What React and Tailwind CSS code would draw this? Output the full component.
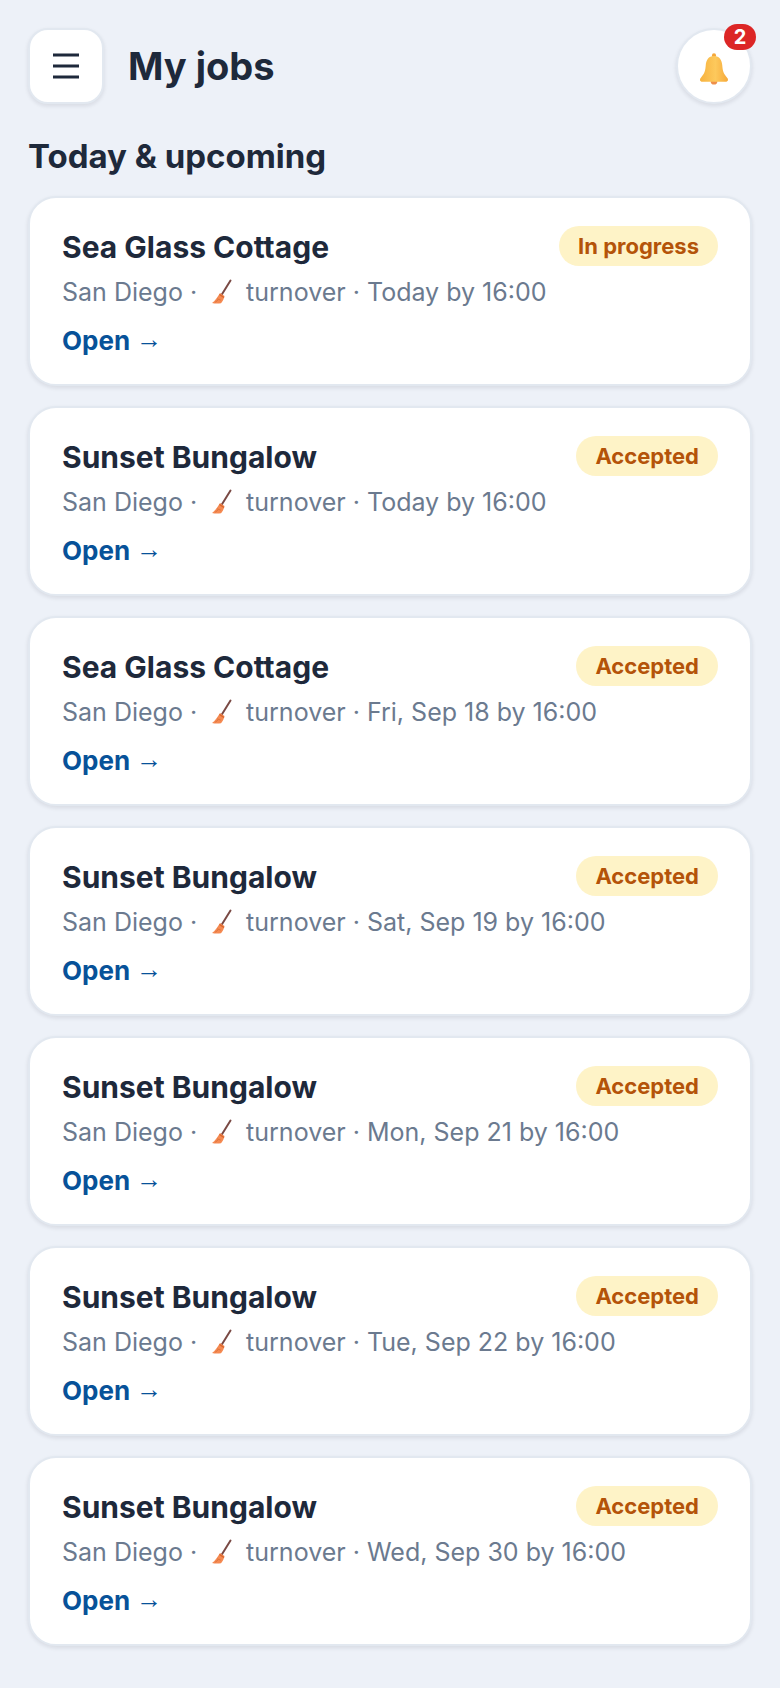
// App.jsx
const jobs = [
  { id: 1, name: 'Sea Glass Cottage', status: 'In progress', when: 'Today by 16:00' },
  { id: 2, name: 'Sunset Bungalow', status: 'Accepted', when: 'Today by 16:00' },
  { id: 3, name: 'Sea Glass Cottage', status: 'Accepted', when: 'Fri, Sep 18 by 16:00' },
  { id: 4, name: 'Sunset Bungalow', status: 'Accepted', when: 'Sat, Sep 19 by 16:00' },
  { id: 5, name: 'Sunset Bungalow', status: 'Accepted', when: 'Mon, Sep 21 by 16:00' },
  { id: 6, name: 'Sunset Bungalow', status: 'Accepted', when: 'Tue, Sep 22 by 16:00' },
  { id: 7, name: 'Sunset Bungalow', status: 'Accepted', when: 'Wed, Sep 30 by 16:00' },
];

const BellIcon = () => (
  <svg width="30" height="32" viewBox="0 0 32 34">
    <defs>
      <linearGradient id="bell" x1="0" y1="0" x2="1" y2="0">
        <stop offset="0" stopColor="#f7b23f" />
        <stop offset="0.55" stopColor="#fdc95c" />
        <stop offset="1" stopColor="#f6a93a" />
      </linearGradient>
    </defs>
    <circle cx="16" cy="2.500" r="2.200" fill="#f5a73a" />
    <ellipse cx="16" cy="30.500" rx="3.500" ry="3" fill="#ee8f4a" />
    <path
      d="M16 3C10 3 7.600 7.500 7.200 13c-.4 5.500-1.200 9-5.400 13.500C.4 28 1 30.500 3.500 30.500h25c2.500 0 3.100-2.500 1.700-4C26 22 25.200 18.500 24.800 13 24.400 7.500 22 3 16 3z"
      fill="url(#bell)"
    />
  </svg>
);

const BroomIcon = () => (
  <svg width="24" height="26" viewBox="0 0 24 26">
    <path d="M21.500 1.500 12.500 16" stroke="#7a4a45" strokeWidth="2" strokeLinecap="round" />
    <path d="M11 14 15.500 17c-.5 2.500-1.500 5-3.500 7.200-3 .5-6.500.4-9-.2C6 22 8.500 18 11 14z" fill="#f58a52" />
    <path d="M10.500 15.500 15 18.500" stroke="#d9662f" strokeWidth="1.500" />
    <path d="M8.500 20l3 1M6.500 23l2-1.500" stroke="#e0733a" strokeWidth="1" strokeLinecap="round" />
  </svg>
);

const JobCard = ({ job }) => (
  <div className="flex h-[190px] flex-col rounded-[28px] border-2 border-[#e2e8f0] bg-white px-[32px] pt-[27px] shadow-[0_2px_4px_rgba(15,23,42,0.1)]">
    <div className="flex items-start justify-between">
      <h3 className="mt-[2px] text-[30px] leading-[40px] font-bold text-[#1e293b]">{job.name}</h3>
      <span className="mt-[1px] rounded-full bg-[#fef3c7] px-[19px] text-[22px] leading-[40px] font-bold text-[#b45309]">
        {job.status}
      </span>
    </div>
    <p className="mt-[7px] flex items-center text-[25px] leading-[36px] text-[#6b7a8f]">
      <span>San Diego ·</span>
      <span className="mr-[13px] ml-[12px] flex"><BroomIcon /></span>
      <span>turnover · {job.when}</span>
    </p>
    <a className="mt-[13px] text-[26px] leading-[36px] font-bold text-[#075299]">
      Open <span className="inline-block -translate-y-[2px] font-['Liberation_Sans',sans-serif] font-normal">→</span>
    </a>
  </div>
);

export default function App() {
  return (
    <div className="min-h-[1688px] bg-[#edf1f8] px-[28px] pt-[28px] font-['Inter',sans-serif]">
      <header className="flex items-center justify-between">
        <div className="flex items-center gap-[24px]">
          <button className="flex h-[76px] w-[76px] items-center justify-center rounded-[20px] border-2 border-[#e2e8f0] bg-white shadow-[0_2px_4px_rgba(15,23,42,0.1)]">
            <svg width="28" height="26" viewBox="0 0 28 26" stroke="#1e293b" strokeWidth="3">
              <path d="M1 2h26M1 13h26M1 24h26" />
            </svg>
          </button>
          <h1 className="text-[38px] leading-[44px] font-bold text-[#1e293b]">My jobs</h1>
        </div>
        <div className="relative">
          <button className="flex h-[76px] w-[76px] items-center justify-center rounded-full border-2 border-[#e2e8f0] bg-white pt-[6px] shadow-[0_2px_4px_rgba(15,23,42,0.1)]">
            <BellIcon />
          </button>
          <span className="absolute top-[-4px] right-[-4px] h-[26px] min-w-[32px] rounded-full bg-[#dc2626] text-center text-[20px] leading-[26px] font-bold text-white">
            2
          </span>
        </div>
      </header>
      <h2 className="mt-[32px] mb-[20px] text-[33px] leading-[40px] font-bold text-[#1e293b]">Today &amp; upcoming</h2>
      <div className="flex flex-col gap-[20px]">
        {jobs.map(job => <JobCard key={job.id} job={job} />)}
      </div>
    </div>
  );
}
